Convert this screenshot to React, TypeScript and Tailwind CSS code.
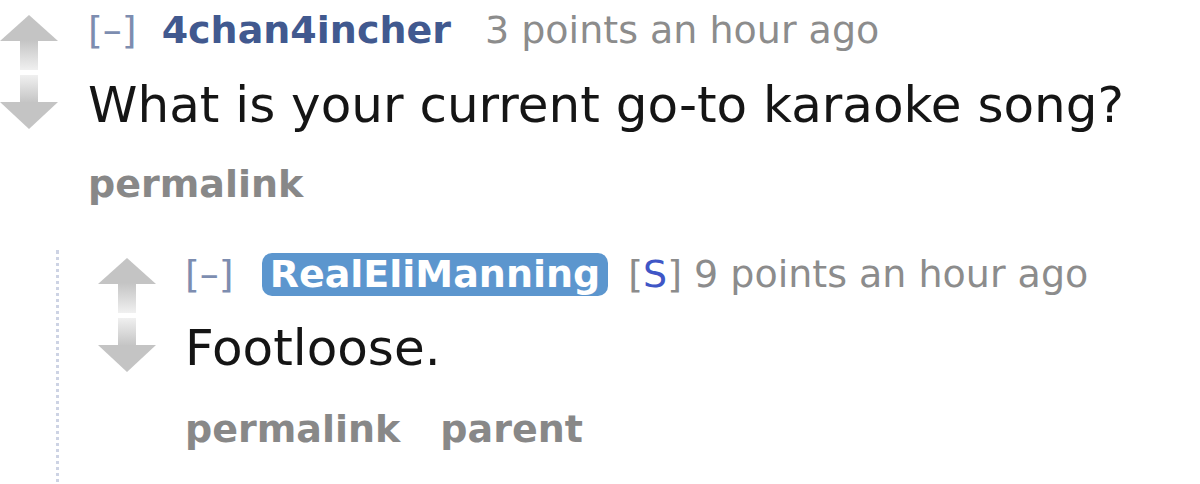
import React from 'react';

function Arrows() {
  return (
    <svg width="58" height="116" viewBox="0 0 58 116" className="shrink-0">
      <defs>
        <linearGradient id="upShaft" x1="0" y1="0" x2="0" y2="1">
          <stop offset="0" stopColor="#c4c4c4" />
          <stop offset="1" stopColor="#f0f0f0" />
        </linearGradient>
        <linearGradient id="downShaft" x1="0" y1="0" x2="0" y2="1">
          <stop offset="0" stopColor="#f0f0f0" />
          <stop offset="1" stopColor="#c4c4c4" />
        </linearGradient>
      </defs>
      <polygon points="29,0 58,26 0,26" fill="#c4c4c4" />
      <rect x="20" y="25" width="18" height="30" fill="url(#upShaft)" />
      <rect x="20" y="60" width="18" height="28" fill="url(#downShaft)" />
      <polygon points="0,87 58,87 29,114" fill="#c4c4c4" />
    </svg>
  );
}

export default function App() {
  return (
    <div
      className="w-[1200px] h-[484px] overflow-hidden bg-white"
      style={{ fontFamily: '"DejaVu Sans", Verdana, sans-serif' }}
    >
      {/* parent comment */}
      <div className="flex items-start">
        <div className="mt-[15px]">
          <Arrows />
        </div>
        <div className="ml-[30px] pt-[8px]">
          <div className="flex items-center whitespace-nowrap text-[38px] leading-[44px]">
            <span className="text-[#7d8db0]">[–]</span>
            <span className="ml-[25px] font-bold text-[#41598f]">4chan4incher</span>
            <span className="ml-[34px] text-[#8c8c8c]">3 points an hour ago</span>
          </div>
          <p className="mt-[25px] whitespace-nowrap text-[50px] leading-[56px] text-[#151515]">
            What is your current go-to karaoke song?
          </p>
          <div className="mt-[29px] text-[38px] leading-[44px] font-bold text-[#888]">permalink</div>
        </div>
      </div>

      {/* child comment */}
      <div className="mt-[44px] ml-[56px] flex items-start border-l-[3px] border-dotted border-[#cdd3e4] pl-[39px] h-[240px]">
        <div className="mt-[8px]">
          <Arrows />
        </div>
        <div className="ml-[29px] pt-[2px]">
          <div className="flex items-center whitespace-nowrap text-[38px] leading-[44px]">
            <span className="text-[#7d8db0]">[–]</span>
            <span className="ml-[28px] rounded-[10px] bg-[#5c96ce] px-[8px] font-bold text-white leading-[43px]">
              RealEliManning
            </span>
            <span className="ml-[20px] text-[#8c8c8c]">
              [<span className="text-[#3f56c6]">S</span>]
            </span>
            <span className="ml-[12px] text-[#8c8c8c]">9 points an hour ago</span>
          </div>
          <p className="mt-[24px] text-[50px] leading-[56px] text-[#151515]">Footloose.</p>
          <div className="mt-[31px] flex gap-[40px] text-[38px] leading-[44px] font-bold text-[#888]">
            <span>permalink</span>
            <span>parent</span>
          </div>
        </div>
      </div>
    </div>
  );
}
